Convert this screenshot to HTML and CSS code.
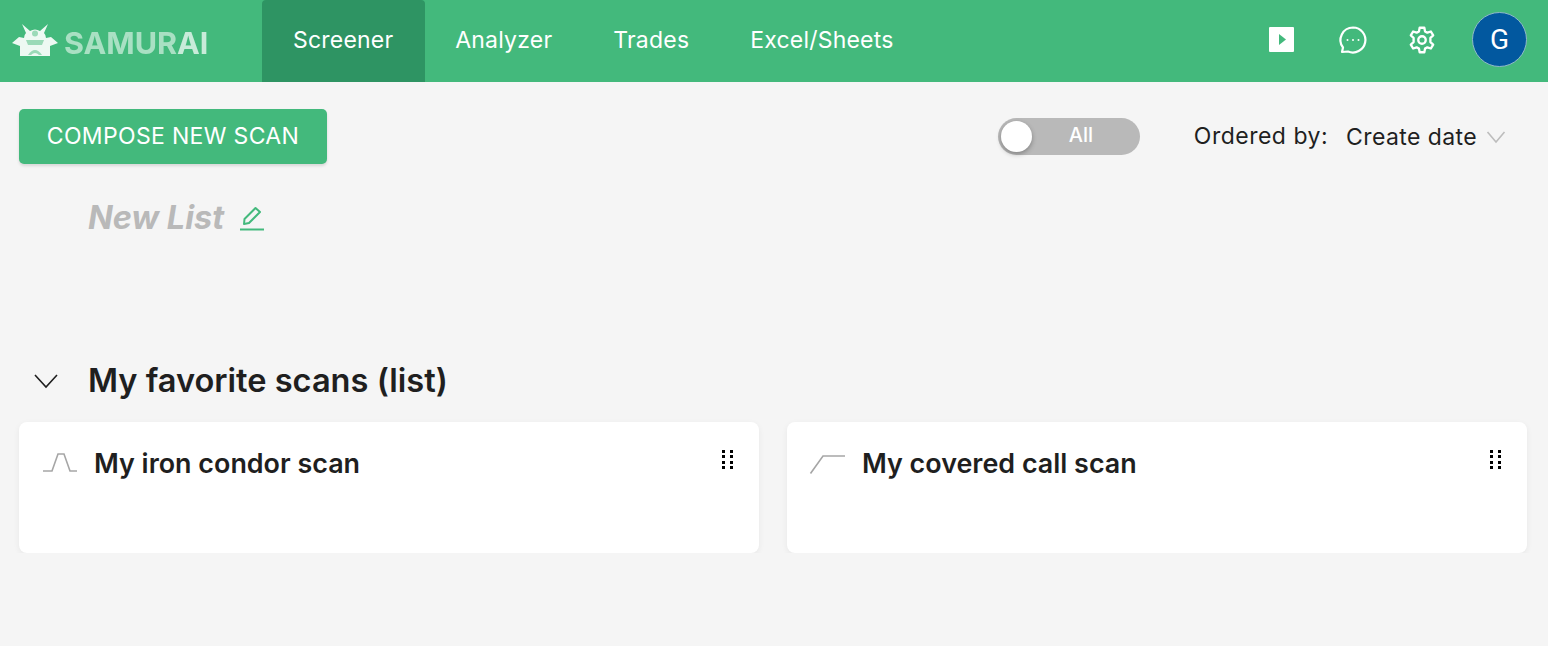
FILE: index.html
```html
<!DOCTYPE html>
<html lang="en">
<head>
    <meta charset="UTF-8">
    <meta name="viewport" content="width=device-width, initial-scale=1.0">
    <title>Samurai Screener</title>
    <link rel="stylesheet" href="styles.css">
</head>
<body>
    <header class="topbar">
        <a href="#" class="logo">
            <svg class="logo-mark" width="46" height="34" viewBox="0 0 46 34">
                <path d="M10 1 L18 8 Q23 5 28 8 L36 1 L32 10 Q34 12 34 15 L39 14 L46 20 L38 23 L38 33 L8 33 L8 23 L0 20 L7 14 L12 15 Q12 12 14 10 Z" fill="#eef9f3"/>
                <path d="M14 17 H32 L30 22 H16 Z" fill="#9bdab8"/>
                <circle cx="23" cy="10.5" r="3" fill="#9bdab8"/>
                <path d="M16 32 Q23 22 30 32 L27 32 Q23 28 19 32 Z" fill="#9bdab8"/>
            </svg>
            <span class="logo-text">SAMUR<span class="logo-end">AI</span></span>
        </a>
        <nav class="main-nav">
            <a href="#" class="nav-link active">Screener</a>
            <a href="#" class="nav-link">Analyzer</a>
            <a href="#" class="nav-link">Trades</a>
            <a href="#" class="nav-link">Excel/Sheets</a>
        </nav>
        <div class="top-icons">
            <svg class="icon-play" width="25" height="25" viewBox="0 0 25 25">
                <rect width="25" height="25" rx="1" fill="#fff"/>
                <path d="M10 7 L17 12.5 L10 18 Z" fill="#43b97c"/>
            </svg>
            <svg class="icon-chat" width="28" height="28" viewBox="0 0 28 28" fill="none" stroke="#fff" stroke-width="2.2">
                <path d="M14 1.5 A12.5 12.5 0 1 1 9 25.5 L3 26 L4 21.5 A12.5 12.5 0 0 1 14 1.5 Z" stroke-linejoin="round"/>
                <circle cx="8.5" cy="14" r="1" fill="#fff" stroke="none"/>
                <circle cx="14" cy="14" r="1" fill="#fff" stroke="none"/>
                <circle cx="19.5" cy="14" r="1" fill="#fff" stroke="none"/>
            </svg>
            <svg class="icon-gear" width="28" height="28" viewBox="0 0 24 24" fill="none" stroke="#fff" stroke-width="2" stroke-linejoin="round">
                <circle cx="12" cy="12" r="3.2"/>
                <path d="M10 1.5 H14 L14.6 4.6 L16.6 5.7 L19.6 4.7 L21.6 8.1 L19.2 10.2 V13.8 L21.6 15.9 L19.6 19.3 L16.6 18.3 L14.6 19.4 L14 22.5 H10 L9.4 19.4 L7.4 18.3 L4.4 19.3 L2.4 15.9 L4.8 13.8 V10.2 L2.4 8.1 L4.4 4.7 L7.4 5.7 L9.4 4.6 Z"/>
            </svg>
            <div class="avatar">G</div>
        </div>
    </header>

    <main class="content">
        <div class="toolbar">
            <button class="compose-btn">COMPOSE NEW SCAN</button>
            <div class="toolbar-right">
                <div class="toggle">
                    <span class="toggle-knob"></span>
                    <span class="toggle-label">All</span>
                </div>
                <span class="order-label">Ordered by:</span>
                <span class="order-value">Create date</span>
                <svg class="order-arrow" width="18" height="12" viewBox="0 0 18 12" fill="none" stroke="#bdbdbd" stroke-width="1.6">
                    <path d="M0.5 1 L9 11 L17.5 1"/>
                </svg>
            </div>
        </div>

        <div class="list-title">
            <span class="list-name">New List</span>
            <svg width="26" height="26" viewBox="0 0 26 26" fill="none" stroke="#43b97c" stroke-width="2">
                <path d="M5 19 L5.5 14 L16.5 3 L21 7 L10 18 Z" stroke-linejoin="round"/>
                <path d="M1 24.5 H25"/>
            </svg>
        </div>

        <div class="section-head">
            <svg class="section-arrow" width="24" height="14" viewBox="0 0 24 14" fill="none" stroke="#1f1f1f" stroke-width="1.6">
                <path d="M1 1 L12 13 L23 1"/>
            </svg>
            <h2>My favorite scans (list)</h2>
        </div>

        <div class="cards">
            <div class="card">
                <svg class="strategy" width="36" height="22" viewBox="0 0 36 22" fill="none" stroke="#a6a6a6" stroke-width="1.6">
                    <path d="M0 19 H9 L15 2 H21 L27 19 H34"/>
                </svg>
                <h3>My iron condor scan</h3>
                <div class="drag-dots"><i></i><i></i><i></i><i></i><i></i><i></i><i></i><i></i></div>
            </div>
            <div class="card">
                <svg class="strategy" width="36" height="22" viewBox="0 0 36 22" fill="none" stroke="#a6a6a6" stroke-width="1.6">
                    <path d="M-0.5 21.5 L12 4 H34"/>
                </svg>
                <h3>My covered call scan</h3>
                <div class="drag-dots"><i></i><i></i><i></i><i></i><i></i><i></i><i></i><i></i></div>
            </div>
        </div>
    </main>
</body>
</html>
```

FILE: styles.css
```css
* {
    box-sizing: border-box;
}

body {
    margin: 0;
    background-color: #f5f5f5;
    color: #1f1f1f;
    font-family: Inter, "Liberation Sans", sans-serif;
}

a {
    text-decoration: none;
}

svg {
    overflow: visible;
}

.topbar {
    display: flex;
    align-items: stretch;
    height: 82px;
    background-color: #43b97c;
}

.logo {
    display: flex;
    align-items: center;
    gap: 6px;
    width: 262px;
    padding: 2px 0 0 12px;
}

.logo-mark {
    margin-bottom: 4px;
    filter: blur(0.4px);
}

.logo-text {
    font-size: 30.5px;
    font-weight: 700;
    color: #a9e0c3;
    filter: blur(0.7px);
}

.logo-end {
    color: #c8ebd9;
}

.main-nav {
    display: flex;
}

.nav-link {
    display: flex;
    align-items: center;
    padding: 0 31px 2px 30px;
    color: #fff;
    font-size: 23px;
    letter-spacing: 0.2px;
}

.nav-link.active {
    padding: 0 32px 2px 31px;
    background-color: #2e9463;
    border-radius: 4px 4px 0 0;
}

.top-icons {
    display: flex;
    align-items: center;
    margin-left: auto;
    padding: 0 21px 3px 0;
}

.icon-play {
    margin-right: 45px;
}

.icon-chat {
    margin-right: 41px;
}

.icon-gear {
    margin-right: 36px;
}

.avatar {
    display: flex;
    align-items: center;
    justify-content: center;
    width: 55px;
    height: 55px;
    border-radius: 50%;
    border: 1px solid #8fb8c8;
    background-color: #02589f;
    color: #fff;
    font-size: 28px;
    font-family: Roboto, sans-serif;
}

.content {
    padding: 27px 21px 0 19px;
}

.toolbar {
    display: flex;
    align-items: center;
    justify-content: space-between;
}

.compose-btn {
    width: 308px;
    height: 55px;
    padding-bottom: 3px;
    border: none;
    border-radius: 5px;
    background-color: #43b97c;
    box-shadow: 0 2px 3px rgba(0, 0, 0, 0.12);
    color: #fff;
    font-family: inherit;
    font-size: 23px;
    letter-spacing: 0.33px;
}

.toolbar-right {
    display: flex;
    align-items: center;
    padding-right: 22px;
}

.toggle {
    display: flex;
    align-items: center;
    width: 142px;
    height: 37px;
    margin-right: 54px;
    padding-left: 3px;
    border-radius: 19px;
    background-color: #b9b9b9;
}

.toggle-knob {
    width: 31px;
    height: 31px;
    border-radius: 50%;
    background-color: #fff;
    box-shadow: 0 2px 5px rgba(0, 0, 0, 0.3);
}

.toggle-label {
    margin: 0 0 3px 37px;
    color: #fff;
    font-size: 20px;
    font-weight: 500;
}

.order-label {
    margin: 0 18px 2px 0;
    font-size: 23px;
    letter-spacing: 0.5px;
}

.order-value {
    margin: 0 10px 0 0;
    font-size: 23px;
    letter-spacing: 0.4px;
}

.list-title {
    display: flex;
    align-items: center;
    gap: 15px;
    margin: 34px 0 0 69px;
}

.list-name {
    color: #b9b9b9;
    font-size: 32.5px;
    font-style: italic;
    font-weight: 700;
}

.section-head {
    display: flex;
    align-items: center;
    margin: 123px 0 0 15px;
}

.section-arrow {
    margin: 2px 30px 0 0;
}

.section-head h2 {
    margin: 0;
    font-size: 32.6px;
    font-weight: 600;
}

.cards {
    display: grid;
    grid-template-columns: 740px 740px;
    gap: 28px;
    margin-top: 22px;
}

.card {
    display: flex;
    align-items: flex-start;
    height: 131px;
    padding: 20px 26px 0 24px;
    border-radius: 8px;
    background-color: #fff;
    box-shadow: 0 2px 6px rgba(0, 0, 0, 0.06);
}

.strategy {
    margin: 10px 15px 0 0;
}

.card h3 {
    flex: 1;
    margin: 0;
    font-size: 26.9px;
    font-weight: 600;
    line-height: 43px;
}

.drag-dots {
    display: grid;
    grid-template-columns: 3px 3px;
    gap: 2.4px 5px;
    margin-top: 8px;
}

.drag-dots i {
    width: 3px;
    height: 3px;
    background-color: #000;
}
```
